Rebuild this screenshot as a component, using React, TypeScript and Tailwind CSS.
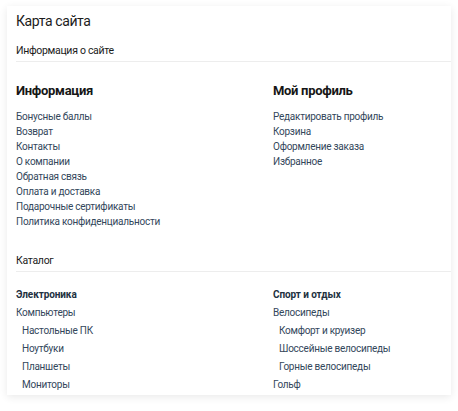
import React from 'react';

const info = [
  'Бонусные баллы',
  'Возврат',
  'Контакты',
  'О компании',
  'Обратная связь',
  'Оплата и доставка',
  'Подарочные сертификаты',
  'Политика конфиденциальности',
];

const profile = ['Редактировать профиль', 'Корзина', 'Оформление заказа', 'Избранное'];

type Item = { label: string; sub?: boolean };

const electronics: Item[] = [
  { label: 'Компьютеры' },
  { label: 'Настольные ПК', sub: true },
  { label: 'Ноутбуки', sub: true },
  { label: 'Планшеты', sub: true },
  { label: 'Мониторы', sub: true },
];

const sport: Item[] = [
  { label: 'Велосипеды' },
  { label: 'Комфорт и круизер', sub: true },
  { label: 'Шоссейные велосипеды', sub: true },
  { label: 'Горные велосипеды', sub: true },
  { label: 'Гольф' },
];

function LinkList({ items }: { items: string[] }) {
  return (
    <ul className="mt-[9px] flex flex-col">
      {items.map((t) => (
        <li key={t} className="text-[10px] leading-[15px] tracking-[-0.25px] text-[#33475b]">
          {t}
        </li>
      ))}
    </ul>
  );
}

function CatalogColumn({ title, items }: { title: string; items: Item[] }) {
  return (
    <div>
      <h3 className="text-[10px] leading-[18px] font-bold tracking-[-0.1px] text-[#22313f]">{title}</h3>
      <ul className="flex flex-col">
        {items.map((it) => (
          <li
            key={it.label}
            className={`text-[10px] leading-[18px] tracking-[-0.25px] text-[#33475b] ${it.sub ? 'pl-[6px]' : ''}`}
          >
            {it.label}
          </li>
        ))}
      </ul>
    </div>
  );
}

export default function App() {
  return (
    <div className="min-h-[411px] w-[458px] bg-white pt-[6px] px-[7px]" style={{ fontFamily: 'Roboto, sans-serif' }}>
      <section className="bg-white pl-[9px] pt-[4px] pb-[1px] shadow-[0_2px_8px_rgba(0,0,0,0.09)]">
        <h1 className="text-[14px] leading-[22px] tracking-[-0.4px] text-[#1c1c1c]">Карта сайта</h1>
        <h2 className="mt-[11px] pb-[2px] text-[10.5px] leading-[16px] tracking-[-0.3px] text-[#1a1a1a] border-b border-[#ededed]">
          Информация о сайте
        </h2>

        <div className="mt-[20px] grid grid-cols-[257px_1fr]">
          <div>
            <h3 className="text-[13px] leading-[18px] font-bold tracking-[-0.3px] text-[#161616]">Информация</h3>
            <LinkList items={info} />
          </div>
          <div>
            <h3 className="text-[13px] leading-[18px] font-bold tracking-[-0.3px] text-[#161616]">Мой профиль</h3>
            <LinkList items={profile} />
          </div>
        </div>

        <h2 className="mt-[24px] pb-[2px] text-[10.5px] leading-[16px] tracking-[-0.3px] text-[#1a1a1a] border-b border-[#ededed]">
          Каталог
        </h2>

        <div className="mt-[14px] grid grid-cols-[257px_1fr]">
          <CatalogColumn title="Электроника" items={electronics} />
          <CatalogColumn title="Спорт и отдых" items={sport} />
        </div>
      </section>
    </div>
  );
}
